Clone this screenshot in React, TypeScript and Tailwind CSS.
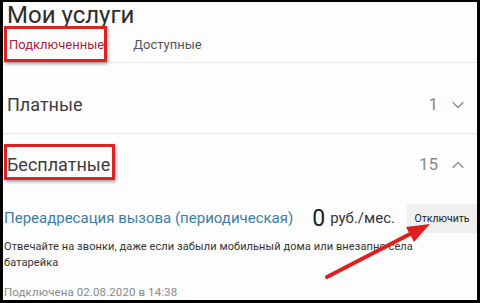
import { ChevronDown, ChevronUp } from "lucide-react";

const font = { fontFamily: "Roboto, 'Noto Sans', sans-serif" };

function Section({ title, count, open }: { title: string; count: number; open?: boolean }) {
  return (
    <div className="flex items-center justify-between pl-[4px] pr-[9px]">
      <span className="text-[18px] text-[#3c3c3c]">{title}</span>
      <div className="flex items-center gap-[10px] text-[#8a8a8a]">
        <span className="text-[17px]">{count}</span>
        {open ? (
          <ChevronUp className="h-[20px] w-[20px]" strokeWidth={1.5} />
        ) : (
          <ChevronDown className="h-[20px] w-[20px]" strokeWidth={1.5} />
        )}
      </div>
    </div>
  );
}

export default function App() {
  return (
    <div className="w-[480px] h-[303px] bg-black pt-[2px] pl-[3px] pr-[3px] pb-[3px]" style={font}>
      <div className="relative h-full w-full overflow-hidden bg-[#fdfdfd]">
        <div className="pl-[4px] pt-[1px] text-[24px] leading-[24px] text-[#2c2c2c]">Мои услуги</div>

        <div className="flex h-[36px] items-center gap-[29px] border-b border-[#e6e6e6] pl-[6px] text-[13px]">
          <span className="text-[#b0203a]">Подключенные</span>
          <span className="text-[#555]">Доступные</span>
        </div>

        <div className="flex h-[71px] flex-col justify-end border-b border-[#e6e6e6] pb-[15px]">
          <Section title="Платные" count={1} />
        </div>

        <div className="pt-[17px]">
          <Section title="Бесплатные" count={15} open />
        </div>

        <div className="mt-[26px] flex items-center">
          <span className="pl-[1px] text-[15px] text-[#3b7fa6]">Переадресация вызова (периодическая)</span>
          <span className="ml-[19px] text-[23px] leading-none text-[#222]">0</span>
          <span className="ml-[5px] text-[15px] text-[#333]">руб./мес.</span>
          <button className="ml-auto flex h-[29px] w-[70px] items-center justify-center bg-[#f0f0f0] text-[10.5px] text-[#222]">
            Отключить
          </button>
        </div>

        <p className="mt-[6px] max-w-[415px] pl-[1px] text-[11px] leading-[16px] tracking-[0.1px] text-[#333]">
          Отвечайте на звонки, даже если забыли мобильный дома или внезапно села батарейка
        </p>

        <p className="mt-[13px] pl-[1px] text-[11.5px] tracking-[0.1px] text-[#8a8a8a]">Подключена 02.08.2020 в 14:38</p>

        <div className="absolute left-[1px] top-[24px] h-[36px] w-[103px] border-[3px] border-[#dc2222] shadow-[1px_2px_3px_rgba(0,0,0,0.35)]" />
        <div className="absolute left-[1px] top-[142px] h-[36px] w-[111px] border-[3px] border-[#dc2222] shadow-[1px_2px_3px_rgba(0,0,0,0.35)]" />

        <svg className="absolute inset-0 h-full w-full" viewBox="3 2 474 298">
          <line x1="327" y1="277" x2="412" y2="233" stroke="#e01e1e" strokeWidth="4" strokeLinecap="round" />
          <polygon points="430,224 406,227 414,242" fill="#e01e1e" />
        </svg>
      </div>
    </div>
  );
}
